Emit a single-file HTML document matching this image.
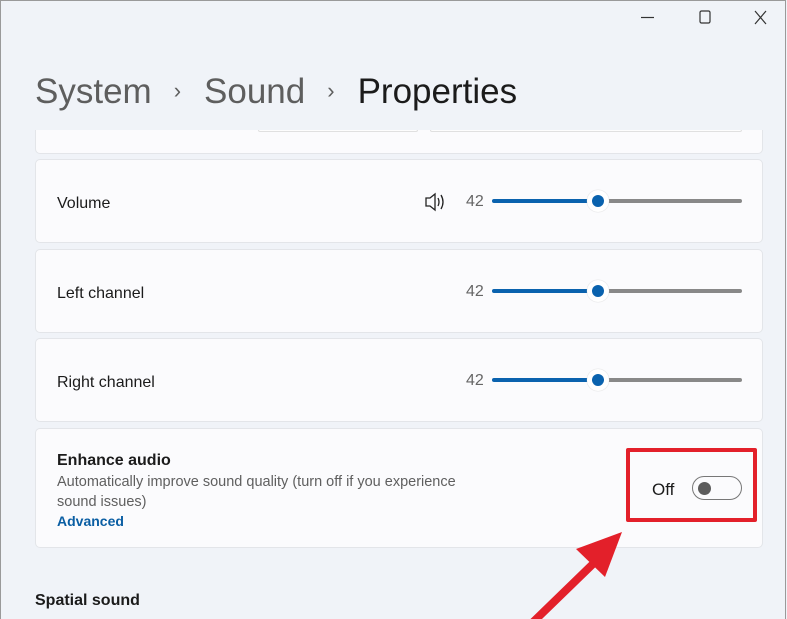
<!DOCTYPE html>
<html><head><meta charset="utf-8"><style>
*{margin:0;padding:0;box-sizing:border-box}
body{width:787px;height:619px;overflow:hidden;background:#f0f3f8;font-family:"Liberation Sans",sans-serif;position:relative;color:#1b1b1b}
.win{position:absolute;left:0;top:0;width:786px;height:619px;border:1px solid #9a9a9a;border-bottom:none}
.card{position:absolute;left:35px;width:728px;background:#fbfbfd;border:1px solid #e3e5e9;border-radius:5px}
.lbl{position:absolute;left:21px;font-size:16px;color:#1b1b1b}
.num{position:absolute;font-size:16px;color:#666}
.track{position:absolute;height:4px;border-radius:2px}
.thumb{position:absolute;width:22px;height:22px;border-radius:50%;background:#fff;box-shadow:0 0 1px #bbb}
.thumb::after{content:"";position:absolute;left:5px;top:5px;width:12px;height:12px;border-radius:50%;background:#0a62ae}
</style></head><body>
<div class="win"></div>
<svg style="position:absolute;left:0;top:0" width="787" height="40">
<line x1="641" y1="17.5" x2="654" y2="17.5" stroke="#333" stroke-width="1.2"/>
<rect x="700" y="11" width="10" height="12" rx="1.5" fill="none" stroke="#333" stroke-width="1.2"/>
<path d="M755 11L766 24M766 11L755 24" stroke="#333" stroke-width="1.2"/>
</svg>
<div style="position:absolute;left:35px;top:72px;font-size:35px;color:#5e5e5e;white-space:nowrap">System<span style="font-size:22px;margin:0 23px 0 22px;position:relative;top:-5px">›</span>Sound<span style="font-size:22px;margin:0 23px 0 22px;position:relative;top:-5px">›</span><span style="color:#1b1b1b">Properties</span></div>

<div class="card" style="top:130px;height:24px;border-top:none;border-radius:0 0 5px 5px"></div>
<div style="position:absolute;left:258px;top:130px;width:160px;height:2px;border:1px solid #e0e0e0;border-top:none;border-radius:0 0 4px 4px;background:#fdfdfd"></div>
<div style="position:absolute;left:430px;top:130px;width:312px;height:2px;border:1px solid #e0e0e0;border-top:none;border-radius:0 0 4px 4px;background:#fdfdfd"></div>

<div class="card" style="top:159px;height:84px"><div class="lbl" style="top:35px">Volume</div></div>
<svg style="position:absolute;left:424px;top:192px" width="22" height="20"><path d="M2 6h4l5-4v16l-5-4H2z" fill="none" stroke="#222" stroke-width="1.3"/><path d="M14 6q2 4 0 8M17 3q4 7 0 14" fill="none" stroke="#222" stroke-width="1.3"/></svg>
<div class="num" style="left:466px;top:193px">42</div>
<div class="track" style="left:492px;top:199px;width:106px;background:#0a62ae"></div>
<div class="track" style="left:598px;top:199px;width:144px;background:#888"></div>
<div class="thumb" style="left:587px;top:190px"></div>

<div class="card" style="top:249px;height:84px"><div class="lbl" style="top:35px">Left channel</div></div>
<div class="num" style="left:466px;top:283px">42</div>
<div class="track" style="left:492px;top:289px;width:106px;background:#0a62ae"></div>
<div class="track" style="left:598px;top:289px;width:144px;background:#888"></div>
<div class="thumb" style="left:587px;top:280px"></div>

<div class="card" style="top:338px;height:84px"><div class="lbl" style="top:35px">Right channel</div></div>
<div class="num" style="left:466px;top:372px">42</div>
<div class="track" style="left:492px;top:378px;width:106px;background:#0a62ae"></div>
<div class="track" style="left:598px;top:378px;width:144px;background:#888"></div>
<div class="thumb" style="left:587px;top:369px"></div>

<div class="card" style="top:428px;height:120px">
<div class="lbl" style="top:23px;font-weight:bold;font-size:16px">Enhance audio</div>
<div style="position:absolute;left:21px;top:43px;font-size:14.5px;color:#5f5f5f;line-height:20px;width:430px">Automatically improve sound quality (turn off if you experience sound issues)</div>
<div style="position:absolute;left:21px;top:84px;font-size:14px;color:#0a5ea3;font-weight:bold">Advanced</div>
</div>
<div style="position:absolute;left:652px;top:480px;font-size:17px">Off</div>
<div style="position:absolute;left:692px;top:476px;width:50px;height:24px;border:1.5px solid #777;border-radius:12px"></div>
<div style="position:absolute;left:698px;top:482px;width:13px;height:13px;border-radius:50%;background:#5c5c5c"></div>
<div style="position:absolute;left:626px;top:448px;width:131px;height:74px;border:4px solid #e3202a;border-radius:2px"></div>
<svg style="position:absolute;left:0;top:0" width="787" height="619"><line x1="528" y1="627" x2="596" y2="561" stroke="#e3202a" stroke-width="8"/><polygon points="622,532 576,549 605,577" fill="#e3202a"/></svg>
<div style="position:absolute;left:35px;top:592px;font-size:16px;font-weight:bold;color:#1b1b1b">Spatial sound</div>
</body></html>
